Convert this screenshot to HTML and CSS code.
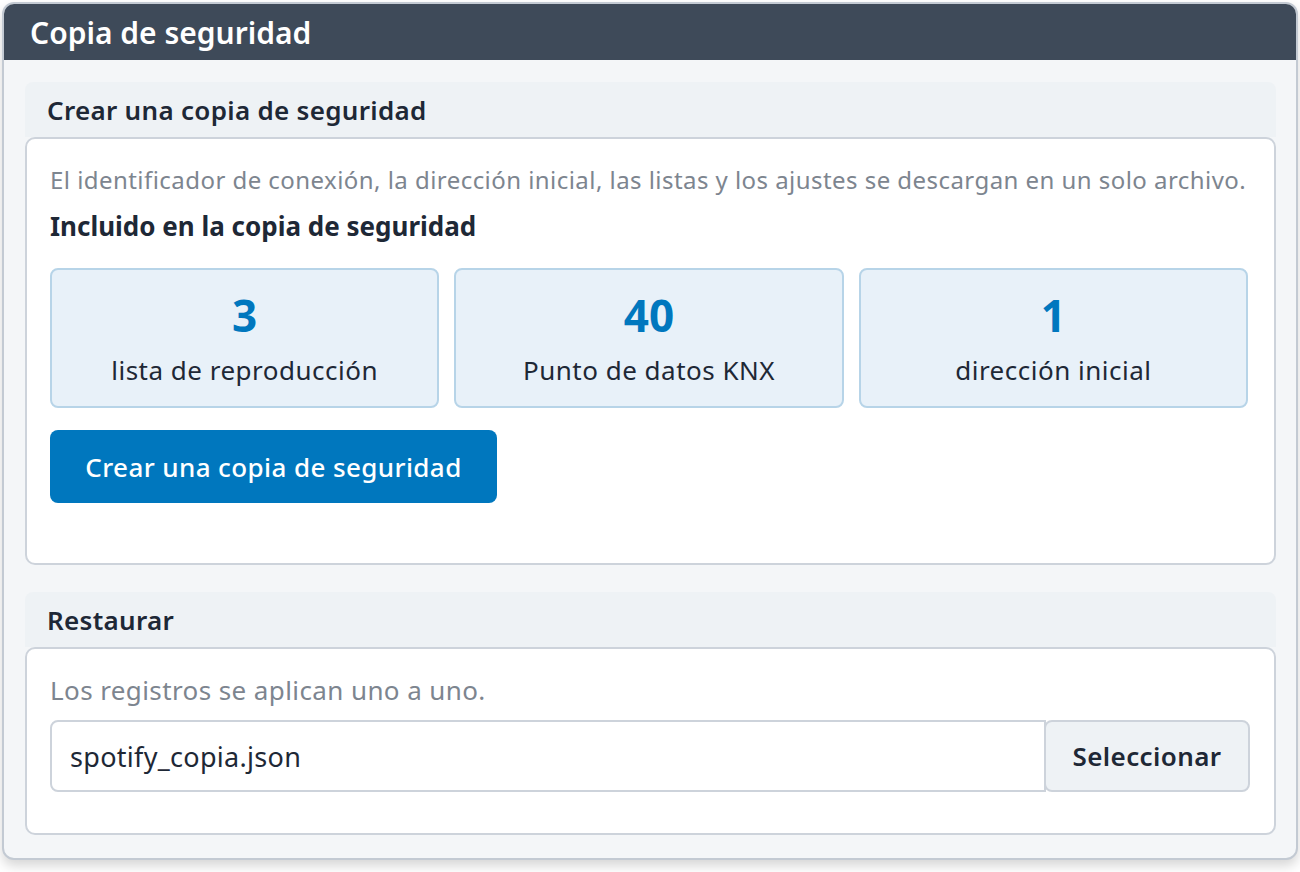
FILE: index.html
```html
<!DOCTYPE html>
<html lang="es">
<head>
<meta charset="utf-8">
<title>Copia de seguridad</title>
<link rel="stylesheet" href="styles.css">
</head>
<body>
<div class="window">
  <div class="titlebar">Copia de seguridad</div>
  <div class="content">
    <section class="group">
      <div class="group-head">Crear una copia de seguridad</div>
      <div class="card">
        <p class="hint">El identificador de conexión, la dirección inicial, las listas y los ajustes se descargan en un solo archivo.</p>
        <h3 class="subhead">Incluido en la copia de seguridad</h3>
        <div class="stats">
          <div class="stat"><div class="num">3</div><div class="label">lista de reproducción</div></div>
          <div class="stat"><div class="num">40</div><div class="label">Punto de datos KNX</div></div>
          <div class="stat"><div class="num">1</div><div class="label">dirección inicial</div></div>
        </div>
        <button class="primary">Crear una copia de seguridad</button>
      </div>
    </section>
    <section class="group">
      <div class="group-head">Restaurar</div>
      <div class="card card-restore">
        <p class="hint hint-lg">Los registros se aplican uno a uno.</p>
        <div class="file-row">
          <div class="file-input">spotify_copia.json</div>
          <button class="secondary">Seleccionar</button>
        </div>
      </div>
    </section>
  </div>
</div>
</body>
</html>
```

FILE: styles.css
```css
* { box-sizing: border-box; }
html, body { margin: 0; padding: 0; background: #ffffff; }
body {
  font-family: "Noto Sans", "Open Sans", sans-serif;
  color: #1e2836;
  width: 1300px;
  height: 872px;
  padding: 2px 2px 0 2px;
}
.window {
  width: 1296px;
  border: 2px solid #c3cad3;
  border-radius: 12px;
  background: #f4f6f8;
  overflow: hidden;
  box-shadow: 0 6px 12px rgba(0,0,0,0.16);
}
.titlebar {
  background: #3e4a59;
  color: #ffffff;
  height: 56px;
  padding-left: 26px;
  display: flex;
  align-items: center;
  font-size: 30px;
  font-weight: 600;
}
.content {
  padding: 22px 20px 23px 21px;
  display: flex;
  flex-direction: column;
  gap: 27px;
}
.group-head {
  background: #eef2f5;
  border-radius: 8px 8px 0 0;
  height: 55px;
  padding-left: 22px;
  display: flex;
  align-items: center;
  font-size: 26px;
  font-weight: 600;
  letter-spacing: 0.3px;
  color: #1e2836;
}
.card {
  background: #ffffff;
  border: 2px solid #cdd3db;
  border-radius: 10px;
  padding: 24px 26px 60px 23px;
}
.card-restore { padding: 24px 24px 41px 23px; }
.hint {
  margin: 0;
  font-size: 24px;
  letter-spacing: 0.45px;
  color: #7d858f;
  line-height: 34px;
  white-space: nowrap;
}
.hint-lg {
  font-size: 26px;
  letter-spacing: 0.4px;
}
.subhead {
  margin: 12px 0 25px 0;
  font-size: 26px;
  font-weight: 700;
  line-height: 34px;
}
.stats {
  display: grid;
  grid-template-columns: repeat(3, 1fr);
  gap: 15px;
}
.stat {
  height: 140px;
  background: #e8f1f9;
  border: 2px solid #b7d4e8;
  border-radius: 8px;
  display: flex;
  flex-direction: column;
  align-items: center;
  justify-content: center;
}
.num {
  font-size: 44px;
  font-weight: 700;
  color: #0077be;
  line-height: 52px;
}
.label {
  margin-top: 12px;
  font-size: 26px;
  letter-spacing: 0.5px;
  color: #1e2836;
  line-height: 34px;
}
.primary {
  margin-top: 22px;
  width: 447px;
  height: 73px;
  background: #0077be;
  color: #ffffff;
  border: none;
  border-radius: 8px;
  font-family: inherit;
  font-size: 26px;
  font-weight: 500;
  letter-spacing: 0.4px;
}
.file-row {
  margin-top: 13px;
  display: flex;
}
.file-input {
  flex: 1;
  height: 72px;
  border: 2px solid #cdd3db;
  border-radius: 8px 0 0 8px;
  display: flex;
  align-items: center;
  padding-left: 18px;
  font-size: 27px;
  letter-spacing: 0.3px;
  color: #1e2836;
}
.secondary {
  width: 206px;
  height: 72px;
  margin-left: -2px;
  background: #eef2f5;
  border: 2px solid #cdd3db;
  border-radius: 8px;
  font-family: inherit;
  font-size: 26px;
  font-weight: 600;
  letter-spacing: 0.4px;
  color: #1e2836;
}
```
